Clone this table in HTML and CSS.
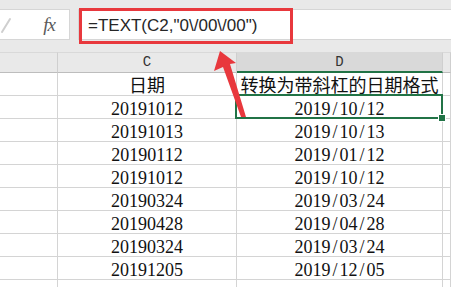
FILE: index.html
```html
<!DOCTYPE html>
<html lang="zh">
<head>
<meta charset="utf-8">
<link rel="stylesheet" href="styles.css">
</head>
<body>
<div class="app">
  <div class="toolbar">
    <div class="fxbox">
      <svg class="check" width="14" height="20" viewBox="0 0 14 20"><path d="M2 16 L10 3" stroke="#cfcfcf" stroke-width="2" fill="none" stroke-linecap="round"/></svg>
      <span class="fx">fx</span>
    </div>
    <div class="formula">=TEXT(C2,"0\/00\/00")</div>
  </div>
  <div class="sheet">
    <div class="hd"></div>
    <div class="hd">C</div>
    <div class="hd sel">D</div>
    <div class="hd"></div>

    <div class="c"></div><div class="c cn">日期</div><div class="c cn">转换为带斜杠的日期格式</div><div class="c"></div>
    <div class="c"></div><div class="c">20191012</div><div class="c active">2019<i>/</i>10<i>/</i>12</div><div class="c"></div>
    <div class="c"></div><div class="c">20191013</div><div class="c">2019<i>/</i>10<i>/</i>13</div><div class="c"></div>
    <div class="c"></div><div class="c">20190112</div><div class="c">2019<i>/</i>01<i>/</i>12</div><div class="c"></div>
    <div class="c"></div><div class="c">20191012</div><div class="c">2019<i>/</i>10<i>/</i>12</div><div class="c"></div>
    <div class="c"></div><div class="c">20190324</div><div class="c">2019<i>/</i>03<i>/</i>24</div><div class="c"></div>
    <div class="c"></div><div class="c">20190428</div><div class="c">2019<i>/</i>04<i>/</i>28</div><div class="c"></div>
    <div class="c"></div><div class="c">20190324</div><div class="c">2019<i>/</i>03<i>/</i>24</div><div class="c"></div>
    <div class="c"></div><div class="c">20191205</div><div class="c">2019<i>/</i>12<i>/</i>05</div><div class="c"></div>
    <div class="c"></div><div class="c"></div><div class="c"></div><div class="c"></div>
  </div>
  <div class="highlight"></div>
  <svg class="arrow" width="451" height="287" viewBox="0 0 451 287">
    <polygon points="220,51 236,63 230,64 246,117 241,117 223,67 214,71" fill="#e8383d"/>
  </svg>
</div>
</body>
</html>
```

FILE: styles.css
```css
html, body {
  margin: 0;
  padding: 0;
  background: #ffffff;
}
.app {
  position: relative;
  width: 451px;
  height: 287px;
  overflow: hidden;
  background: #e9e9e9;
}
.toolbar {
  display: flex;
  padding-top: 9px;
  height: 43px;
  box-sizing: border-box;
  gap: 8px;
}
.fxbox {
  width: 70px;
  height: 31px;
  box-sizing: border-box;
  background: #fff;
  border: 1px solid #d6d6d6;
  border-left: none;
  display: flex;
  align-items: center;
  justify-content: space-between;
  padding-right: 14px;
}
.check {
  margin-top: 2px;
}
.fx {
  font-family: "Liberation Serif", serif;
  font-style: italic;
  font-size: 19px;
  color: #5a5a5a;
  letter-spacing: -1px;
}
.formula {
  flex: 1;
  height: 31px;
  box-sizing: border-box;
  background: #fff;
  border-top: 1px solid #d6d6d6;
  border-bottom: 1px solid #d6d6d6;
  border-left: 1px solid #d6d6d6;
  padding-left: 9px;
  font-family: "Liberation Sans", Arial, sans-serif;
  font-size: 17px;
  line-height: 31px;
  color: #262626;
}
.sheet {
  display: grid;
  grid-template-columns: 58px 179px 206px 1fr;
  grid-template-rows: 21px;
  grid-auto-rows: 23px;
  margin-top: 9px;
  background: #fff;
}
.hd {
  background: #e9e9e9;
  border-top: 1px solid #d9d9d9;
  border-right: 1px solid #cfcfcf;
  border-bottom: 1px solid #bdbdbd;
  box-sizing: border-box;
  font-family: "Liberation Mono", monospace;
  font-size: 14px;
  line-height: 19px;
  text-align: center;
  color: #333;
}
.hd.sel {
  background: #d9d9d9;
  border-bottom: 2px solid #217346;
  line-height: 18px;
}
.c {
  border-right: 1px solid #d4d4d4;
  border-bottom: 1px solid #d4d4d4;
  box-sizing: border-box;
  text-align: center;
  font-family: "Liberation Serif", serif;
  font-size: 18px;
  line-height: 19px;
  padding-top: 4px;
  color: #111;
  white-space: nowrap;
  overflow: visible;
}
.c i {
  font-style: normal;
  display: inline-block;
  width: 9px;
  text-align: center;
}
.c.cn {
  font-family: "Noto Sans CJK SC", sans-serif;
  font-size: 18px;
  line-height: 20px;
  padding-top: 1px;
}
.c.active {
  position: relative;
}
.c.active::after {
  content: "";
  position: absolute;
  left: -2px;
  top: -2px;
  right: -1px;
  bottom: -1px;
  border: 2px solid #217346;
}
.c.active::before {
  content: "";
  position: absolute;
  right: -4px;
  bottom: -4px;
  width: 6px;
  height: 6px;
  background: #217346;
  border: 1px solid #fff;
  z-index: 2;
}
.highlight {
  position: absolute;
  left: 79px;
  top: 8px;
  width: 214px;
  height: 36px;
  border: 3px solid #e8383d;
  box-sizing: border-box;
}
.arrow {
  position: absolute;
  left: 0;
  top: 0;
}
```
